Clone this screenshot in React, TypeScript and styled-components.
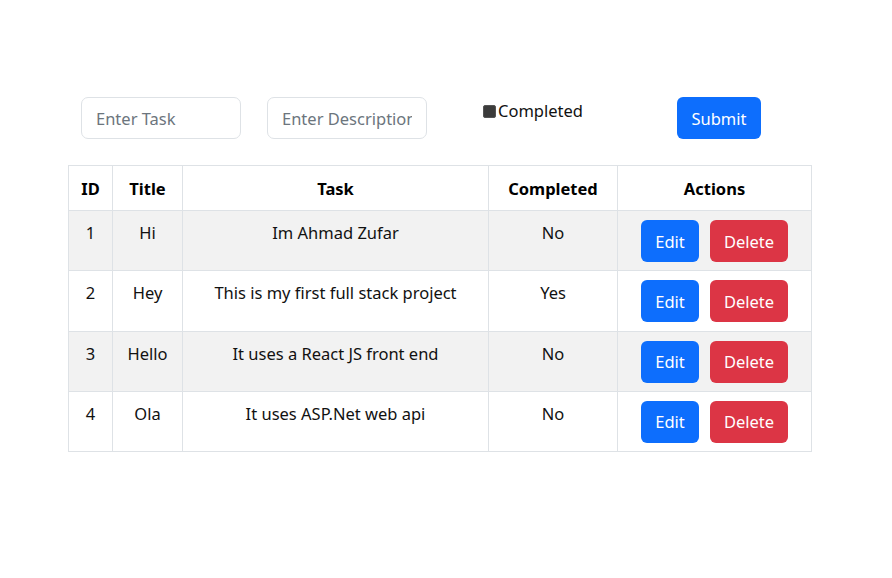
import React from "react";
import styled, { createGlobalStyle } from "styled-components";

const Global = createGlobalStyle`
  html, body { margin: 0; padding: 0; background: #fff; }
  body { font-family: "Noto Sans", "Open Sans", sans-serif; color: #000; }
  * { box-sizing: border-box; }
`;

const Page = styled.div`
  width: 892px;
  padding: 97px 0 0 68px;
`;

const Container = styled.div`
  width: 743px;
  display: flex;
  flex-direction: column;
  gap: 26px;
`;

const FormRow = styled.div`
  display: flex;
  align-items: flex-start;
  padding-left: 13px;
`;

const Input = styled.input<{ $ml?: number }>`
  width: 160px;
  height: 42px;
  margin-left: ${(p) => p.$ml ?? 0}px;
  padding: 0 14px;
  border: 1px solid #dee2e6;
  border-radius: 7px;
  font-family: inherit;
  font-size: 16.5px;
  color: #212529;
  outline: none;
  &::placeholder { color: #6c757d; }
`;

const CheckLabel = styled.label`
  display: flex;
  align-items: center;
  width: 100px;
  margin-left: 56px;
  margin-top: 2px;
  font-size: 16.5px;
  line-height: 24px;
  color: #111;
  white-space: nowrap;
`;

const Box = styled.span`
  width: 13px;
  height: 13px;
  border-radius: 2px;
  background: #3b3b3b;
  border: 1px solid #555;
  margin-right: 2px;
  flex-shrink: 0;
`;

const Button = styled.button<{ $variant: "primary" | "danger" }>`
  height: 42px;
  padding: 0 12px;
  border: none;
  border-radius: 6px;
  font-family: inherit;
  font-size: 16.5px;
  color: #fff;
  background: ${(p) => (p.$variant === "primary" ? "#0d6efd" : "#dc3545")};
  cursor: pointer;
`;

const SubmitButton = styled(Button)`
  margin-left: 94px;
  width: 84px;
`;

const Table = styled.table`
  width: 743px;
  border-collapse: collapse;
  table-layout: fixed;
  font-size: 16.5px;
`;

const Th = styled.th<{ $w: number }>`
  width: ${(p) => p.$w}px;
  height: 45px;
  border: 1px solid #dee2e6;
  font-weight: 700;
  text-align: center;
  vertical-align: middle;
  padding: 0 4px;
`;

const Tr = styled.tr<{ $striped: boolean }>`
  background: ${(p) => (p.$striped ? "#f2f2f2" : "#fff")};
`;

const Td = styled.td`
  height: 60.25px;
  border: 1px solid #dee2e6;
  text-align: center;
  vertical-align: top;
  padding: 10px 4px 0;
  line-height: 24px;
  color: #111;
`;

const ActionCell = styled(Td)`
  padding-top: 9px;
`;

const Actions = styled.div`
  display: flex;
  justify-content: center;
  gap: 11px;
`;

const EditButton = styled(Button)`
  width: 58px;
`;
const DeleteButton = styled(Button)`
  width: 78px;
`;

const rows = [
  { id: 1, title: "Hi", task: "Im Ahmad Zufar", done: "No" },
  { id: 2, title: "Hey", task: "This is my first full stack project", done: "Yes" },
  { id: 3, title: "Hello", task: "It uses a React JS front end", done: "No" },
  { id: 4, title: "Ola", task: "It uses ASP.Net web api", done: "No" },
];

export default function App() {
  return (
    <>
      <Global />
      <Page>
        <Container>
          <FormRow>
            <Input placeholder="Enter Task" />
            <Input placeholder="Enter Description" $ml={26} />
            <CheckLabel>
              <Box />
              Completed
            </CheckLabel>
            <SubmitButton $variant="primary">Submit</SubmitButton>
          </FormRow>
          <Table>
            <thead>
              <tr>
                <Th $w={44}>ID</Th>
                <Th $w={70}>Title</Th>
                <Th $w={306}>Task</Th>
                <Th $w={129}>Completed</Th>
                <Th $w={194}>Actions</Th>
              </tr>
            </thead>
            <tbody>
              {rows.map((r, i) => (
                <Tr key={r.id} $striped={i % 2 === 0}>
                  <Td>{r.id}</Td>
                  <Td>{r.title}</Td>
                  <Td>{r.task}</Td>
                  <Td>{r.done}</Td>
                  <ActionCell>
                    <Actions>
                      <EditButton $variant="primary">Edit</EditButton>
                      <DeleteButton $variant="danger">Delete</DeleteButton>
                    </Actions>
                  </ActionCell>
                </Tr>
              ))}
            </tbody>
          </Table>
        </Container>
      </Page>
    </>
  );
}
